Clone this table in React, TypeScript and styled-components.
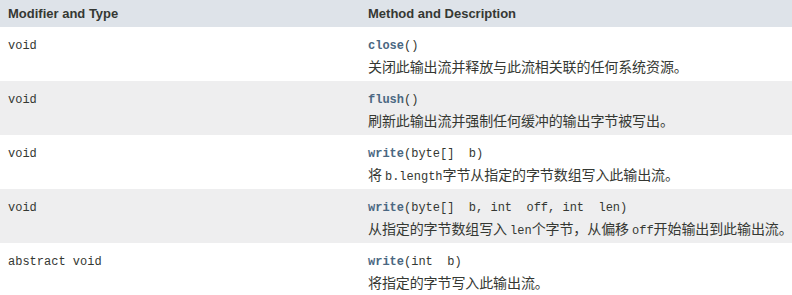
import type { ReactNode } from "react";
import styled, { createGlobalStyle } from "styled-components";

const GlobalStyle = createGlobalStyle`
  html, body {
    margin: 0;
    padding: 0;
    background: #ffffff;
  }
`;

const Table = styled.div`
  display: grid;
  grid-template-columns: 360px 1fr;
  width: 792px;
  color: #353833;
`;

const HeaderCell = styled.div`
  height: 27px;
  box-sizing: border-box;
  padding: 0 8px;
  display: flex;
  align-items: center;
  background: #dee3e9;
  font-family: "Liberation Sans", Arial, sans-serif;
  font-weight: bold;
  font-size: 13px;
  color: #353833;
`;

const Row = styled.div<{ $alt: boolean }>`
  grid-column: 1 / -1;
  display: grid;
  grid-template-columns: 360px 1fr;
  height: 54px;
  box-sizing: border-box;
  padding: 10px 0 6px;
  background: ${(p) => (p.$alt ? "#eeeeef" : "#ffffff")};
`;

const TypeCell = styled.div`
  padding: 0 8px;
  font-family: "Liberation Mono", "Courier New", monospace;
  font-size: 12px;
  line-height: 19px;
  white-space: pre;
`;

const DescCell = styled.div`
  padding: 0 8px;
  display: flex;
  flex-direction: column;
`;

const Signature = styled.div`
  font-family: "Liberation Mono", "Courier New", monospace;
  font-size: 12px;
  line-height: 19px;
  white-space: pre;
`;

const MethodName = styled.span`
  font-weight: bold;
  color: #4a6782;
`;

const Description = styled.div`
  font-family: "Noto Sans CJK SC", "Liberation Sans", sans-serif;
  font-size: 14px;
  line-height: 20px;
  letter-spacing: -0.1px;
  white-space: nowrap;
`;

const Code = styled.span`
  font-family: "Liberation Mono", "Courier New", monospace;
  font-size: 12px;
  letter-spacing: 0;
`;

type Method = {
  type: string;
  name: string;
  params: string;
  desc: ReactNode;
};

const methods: Method[] = [
  {
    type: "void",
    name: "close",
    params: "()",
    desc: "关闭此输出流并释放与此流相关联的任何系统资源。",
  },
  {
    type: "void",
    name: "flush",
    params: "()",
    desc: "刷新此输出流并强制任何缓冲的输出字节被写出。",
  },
  {
    type: "void",
    name: "write",
    params: "(byte[]  b)",
    desc: (
      <>
        将 <Code>b.length</Code>字节从指定的字节数组写入此输出流。
      </>
    ),
  },
  {
    type: "void",
    name: "write",
    params: "(byte[]  b, int  off, int  len)",
    desc: (
      <>
        从指定的字节数组写入 <Code>len</Code>个字节，从偏移 <Code>off</Code>
        开始输出到此输出流。
      </>
    ),
  },
  {
    type: "abstract void",
    name: "write",
    params: "(int  b)",
    desc: "将指定的字节写入此输出流。",
  },
];

const App = () => {
  return (
    <>
      <GlobalStyle />
      <Table>
        <HeaderCell>Modifier and Type</HeaderCell>
        <HeaderCell>Method and Description</HeaderCell>
        {methods.map((m, i) => (
          <Row key={`m-${i}`} $alt={i % 2 === 1}>
            <TypeCell>{m.type}</TypeCell>
            <DescCell>
              <Signature>
                <MethodName>{m.name}</MethodName>
                {m.params}
              </Signature>
              <Description>{m.desc}</Description>
            </DescCell>
          </Row>
        ))}
      </Table>
    </>
  );
};

export default App;
